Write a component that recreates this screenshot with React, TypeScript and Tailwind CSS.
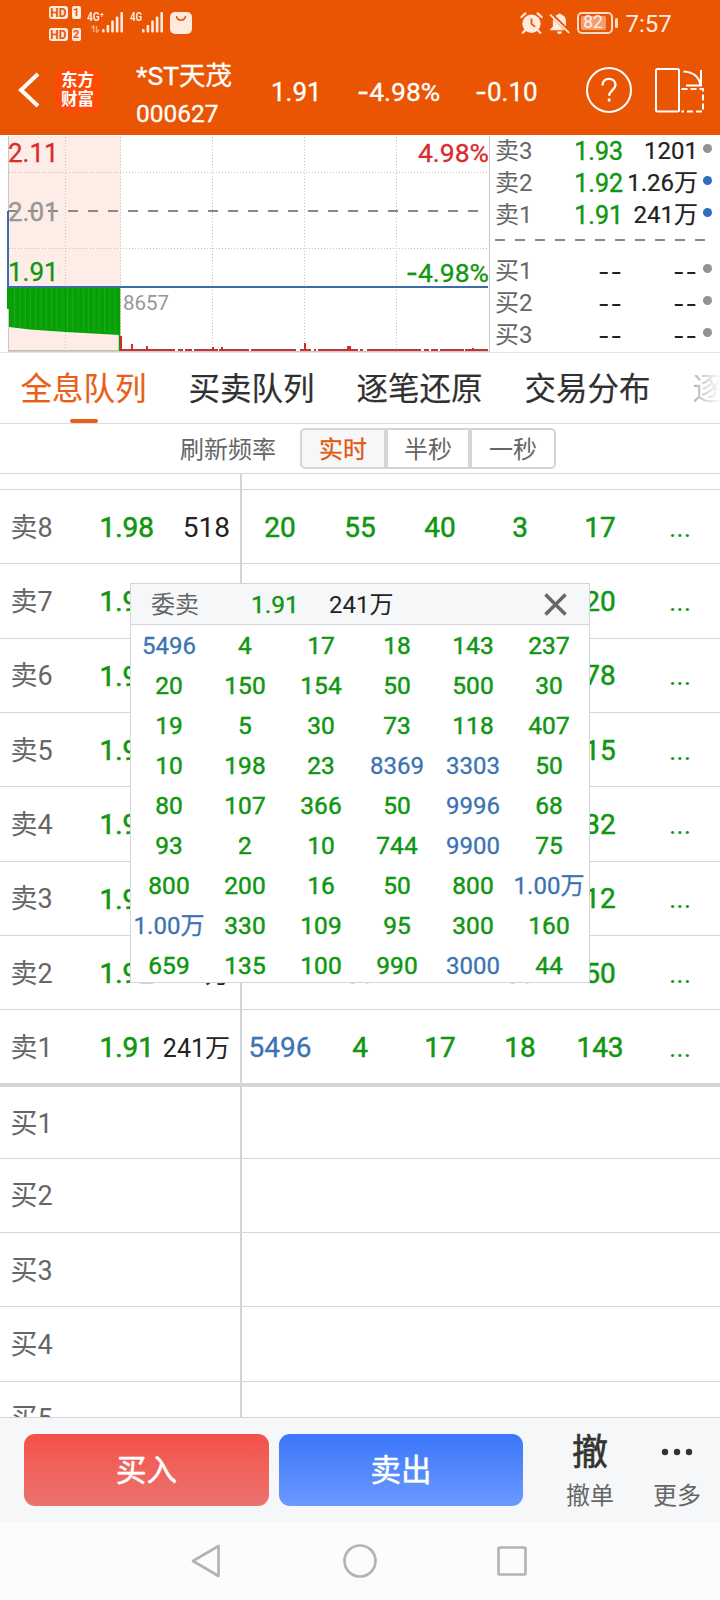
import React from "react";

type Cell = string;

const asks: { label: string; price: string; vol: string; queue: Cell[] }[] = [
  { label: "卖8", price: "1.98", vol: "518", queue: ["20", "55", "40", "3", "17"] },
  { label: "卖7", price: "1.97", vol: "", queue: ["", "", "", "", "20"] },
  { label: "卖6", price: "1.96", vol: "", queue: ["", "", "", "", "78"] },
  { label: "卖5", price: "1.95", vol: "", queue: ["", "", "", "", "15"] },
  { label: "卖4", price: "1.94", vol: "", queue: ["", "", "", "", "32"] },
  { label: "卖3", price: "1.93", vol: "", queue: ["", "", "", "", "12"] },
  { label: "卖2", price: "1.92", vol: "1.26万", queue: ["", "50", "", "50", "50"] },
  { label: "卖1", price: "1.91", vol: "241万", queue: ["5496", "4", "17", "18", "143"] },
];

const bids = ["买1", "买2", "买3", "买4", "买5"];

const popupRows: Cell[][] = [
  ["5496", "4", "17", "18", "143", "237"],
  ["20", "150", "154", "50", "500", "30"],
  ["19", "5", "30", "73", "118", "407"],
  ["10", "198", "23", "8369", "3303", "50"],
  ["80", "107", "366", "50", "9996", "68"],
  ["93", "2", "10", "744", "9900", "75"],
  ["800", "200", "16", "50", "800", "1.00万"],
  ["1.00万", "330", "109", "95", "300", "160"],
  ["659", "135", "100", "990", "3000", "44"],
];

const isLarge = (v: Cell) => v.includes("万") || Number(v) >= 3000;

function Signal() {
  return (
    <svg width="22" height="21" viewBox="0 0 22 21" fill="#ffeadf">
      <rect x="0" y="17" width="2.6" height="3.6" rx="1" />
      <rect x="4.6" y="13" width="2.6" height="7.6" rx="1" />
      <rect x="9.2" y="8.5" width="2.6" height="12" rx="1" />
      <rect x="13.8" y="4.5" width="2.6" height="16" rx="1" />
      <rect x="18.4" y="0" width="2.6" height="20.6" rx="1" />
    </svg>
  );
}

function HdBadge({ n }: { n: string }) {
  return (
    <div className="flex gap-[4px]">
      <span className="flex h-[13px] w-[19px] items-center justify-center rounded-[3px] bg-[#ffeadf] text-[12px] font-bold leading-none text-[#ea5504]">
        HD
      </span>
      <span className="flex h-[13px] w-[8.5px] items-center justify-center rounded-[2px] bg-[#ffeadf] text-[11px] font-bold leading-none text-[#ea5504]">
        {n}
      </span>
    </div>
  );
}

function StatusBar() {
  return (
    <div className="flex h-[45px] items-start pl-[49px] text-[#ffeadf]">
      <div className="flex flex-col gap-[9px] pt-[6px]">
        <HdBadge n="1" />
        <HdBadge n="2" />
      </div>
      <div className="ml-[6px] flex w-[15px] flex-col pt-[12px]">
        <span className="w-[20px] origin-left scale-x-[.85] text-[12px] font-bold leading-[10px] whitespace-nowrap">4G⁺</span>
        <svg className="ml-[4px] mt-[3px]" width="9" height="8" viewBox="0 0 9 8" fill="none" stroke="#f6a67b" strokeWidth="1.5">
          <path d="M0.5 3L2.7 .8V7M5.5 1V7L8 4.7" />
        </svg>
      </div>
      <div className="pt-[12px]"><Signal /></div>
      <div className="ml-[6px] w-[12px] pt-[12px]">
        <span className="block w-[16px] origin-left scale-x-[.8] text-[12px] font-bold leading-[10px]">4G</span>
      </div>
      <div className="pt-[12px]"><Signal /></div>
      <svg className="ml-[6px] mt-[12px]" width="22" height="22" viewBox="0 0 22 22">
        <rect width="22" height="22" rx="5" fill="#ffeadf" />
        <path d="M6.5 4.5a4.6 4.6 0 0 0 9 0" fill="none" stroke="#ea5504" strokeWidth="1.5" strokeLinecap="round" />
      </svg>
      <svg className="ml-[328px] mt-[12px]" width="23" height="22" viewBox="0 0 23 22">
        <circle cx="11.5" cy="11.7" r="9.2" fill="#ffeadf" />
        <path d="M1.4 5L5.4 1.4M21.6 5L17.6 1.4M5 18.5l-2.2 2.2M18 18.5l2.2 2.2" stroke="#ffeadf" strokeWidth="2.2" strokeLinecap="round" />
        <path d="M11.5 6.5v5.4l3.6 3" fill="none" stroke="#ea5504" strokeWidth="1.8" />
      </svg>
      <svg className="ml-[6px] mt-[12px]" width="21" height="22" viewBox="0 0 21 22">
        <path d="M6.500 3.800L17 14.200V8.800C17 5.700 15.200 3.200 12.200 2.400a1.800 1.800 0 0 0-3.200 0C8 2.700 7.200 3.200 6.500 3.800ZM4.300 7C4 7.600 3.900 8.200 3.900 8.800V14.400L1.200 17.200V18.200H15.400Z" fill="#ffeadf" />
        <path d="M8 19.600h5a2.500 2.500 0 0 1-5 0Z" fill="#ffeadf" />
        <path d="M2.800 2.300L20 18.800" stroke="#ea5504" strokeWidth="1.500" />
        <path d="M1.600 3.200L19.600 20.400" stroke="#ffeadf" strokeWidth="1.800" strokeLinecap="round" />
      </svg>
      <div className="ml-[7px] mt-[12px] flex h-[22px] items-center gap-[2px]">
        <div className="flex h-[22px] w-[36px] rounded-[5px] border-2 border-[#ffd9c4] p-[2px]">
          <div className="flex w-[25px] items-center justify-center rounded-[2px] bg-[#f39d6f] text-[17.500px] leading-none text-[#fff1e9]">82</div>
        </div>
        <div className="h-[10px] w-[3px] rounded-full bg-[#ffd9c4]" />
      </div>
      <span className="ml-[8px] mt-[12px] text-[24px] leading-[24px]">7:57</span>
    </div>
  );
}

function Minus() {
  return <span className="font-[Inter,sans-serif]">-</span>;
}

function Header() {
  return (
    <header className="h-[135px] bg-[#ea5504] text-white">
      <StatusBar />
      <div className="flex h-[90px] items-center pl-[18px]">
        <svg width="22" height="36" viewBox="0 0 22 36" fill="none" stroke="#fff" strokeWidth="4">
          <path d="M20 2L3 18L20 34" />
        </svg>
        <div className="ml-[15px] flex h-[45px] w-[45px] flex-col items-center justify-center rounded-[10px] bg-[#fd4a06] text-[16.500px] font-bold leading-[19px]">
          <span>东方</span>
          <span>财富</span>
        </div>
        <div className="ml-[36px] flex w-[135px] flex-col pt-[10px] [-webkit-text-stroke:0.3px_currentColor]">
          <span className="text-[26.500px] leading-[38px]">*ST天茂</span>
          <span className="text-[24.500px] leading-[38px]">000627</span>
        </div>
        <span className="w-[86px] pt-[4px] text-[26px] [-webkit-text-stroke:0.3px_currentColor]">1.91</span>
        <span className="w-[118px] pt-[4px] text-[26.500px] [-webkit-text-stroke:0.3px_currentColor]"><Minus />4.98%</span>
        <span className="w-[111px] pt-[4px] text-[26px] [-webkit-text-stroke:0.3px_currentColor]"><Minus />0.10</span>
        <svg width="46" height="46" viewBox="0 0 46 46" fill="none" stroke="#fff" strokeWidth="2">
          <circle cx="23" cy="23" r="22" />
          <path d="M16.500 18.500c0-4 2.700-6.700 6.500-6.700s6.500 2.500 6.500 6c0 5-6.300 5.800-6.300 11" strokeWidth="2.300" />
          <path d="M23.100 31.500v3" strokeWidth="2.600" />
        </svg>
        <svg className="ml-[23px]" width="49" height="46" viewBox="0 0 49 46" fill="none" stroke="#fff" strokeWidth="2">
          <rect x="1" y="2" width="23" height="42.500" rx="1.500" />
          <path d="M28.500 4.500C38 5 44 10 45.500 18M46 3V18.500H31" />
          <path d="M26.500 22H48V44.500H26.500" strokeDasharray="6 3" />
        </svg>
      </div>
    </header>
  );
}

const redTicks: [number, number][] = [[132, 6], [147, 4], [213, 3], [222, 3], [305, 7], [348, 4], [350, 4], [473, 2]];

function Chart() {
  return (
    <div className="relative h-[217px] w-[490px]">
      <svg width="490" height="217" viewBox="0 135 490 217">
        <rect x="9" y="136" width="112" height="216" fill="#fdede6" />
        <path d="M8.500 136V352M489.500 136V352" stroke="#c9c9c9" />
        <path d="M8 351.500H490" stroke="#e3c4c4" />
        <path d="M65.500 137V350M120.500 137V350M212.500 137V350M304.500 137V350M396.500 137V350M9 172.500H488M9 248.500H488" stroke="#c4c4c4" strokeDasharray="1 2" />
        <path d="M8 211H488" stroke="#888" strokeWidth="2" strokeDasharray="10 10" />
        <path d="M7 287H120V335L66 332L30 329.500L9 327V309H7Z" fill="#07a007" />
        {Array.from({ length: 20 }, (_, i) => (
          <path key={i} d={`M${14.500 + i * 5.300} 289V${327 + i * 0.3}`} stroke="#27ad27" strokeWidth="0.8" />
        ))}
        <path d="M119.500 287V351" stroke="#07a007" strokeWidth="1.500" />
        <path d="M9 350.500H119" stroke="#a9cf9c" />
        <path d="M8 211V287H488" fill="none" stroke="#386eaa" strokeWidth="2" />
        <path d="M121 336V351" stroke="#d8282c" strokeWidth="2" />
        <path d="M121 350H488" stroke="#b73a3c" strokeWidth="2" strokeDasharray="54 3 5 2 7 2 24 1 30 2 45 4 11 3 2 2 40 2 3 4" />
        {redTicks.map(([x, h]) => (
          <rect key={x} x={x - 1} y={350 - h} width="2" height={h} fill="#d8282c" />
        ))}
      </svg>
      <div className="absolute inset-0 text-[26px] leading-[30px] [-webkit-text-stroke:0.3px_currentColor]">
        <span className="absolute left-[8px] top-[3px] text-[#d92b2b]">2.11</span>
        <span className="absolute left-[8px] top-[62px] text-[#979797]">2.01</span>
        <span className="absolute left-[8px] top-[122px] text-[#109610]">1.91</span>
        <span className="absolute right-[1px] top-[3px] text-[26.500px] text-[#d92b2b]">4.98%</span>
        <span className="absolute right-[1px] top-[122px] text-[26.500px] text-[#109610]"><Minus />4.98%</span>
        <span className="absolute left-[123px] top-[153px] text-[20.500px] text-[#979797] [-webkit-text-stroke:0px]">8657</span>
      </div>
    </div>
  );
}

function QuoteRow({ l, p, v, blue }: { l: string; p: string; v: string; blue?: boolean }) {
  const empty = p === "--";
  return (
    <div className="flex h-[32px] items-center pl-[5px]">
      <span className="w-[50px] text-[24px] text-[#666]">{l}</span>
      <span className={empty ? "w-[78px] pt-[2px] text-right font-[Inter,sans-serif] tracking-[1px] text-[25px] text-[#222]" : "w-[78px] text-right text-[25px] text-[#109610] [-webkit-text-stroke:0.4px_currentColor]"}>{p}</span>
      <span className={empty ? "w-[75px] pt-[2px] text-right font-[Inter,sans-serif] tracking-[1px] text-[25px] text-[#222]" : "w-[75px] whitespace-nowrap text-right text-[24px] text-[#222] [-webkit-text-stroke:0.2px_currentColor]"}>{v}</span>
      <span className={blue ? "mb-[5px] ml-[5px] size-[9px] rounded-full bg-[#2f6fbd]" : "mb-[5px] ml-[5px] size-[9px] rounded-full bg-[#929297]"} />
    </div>
  );
}

function Quotes() {
  return (
    <div className="w-[230px] leading-none">
      <QuoteRow l="卖3" p="1.93" v="1201" />
      <QuoteRow l="卖2" p="1.92" v="1.26万" blue />
      <QuoteRow l="卖1" p="1.91" v="241万" blue />
      <svg className="block" width="230" height="24">
        <path d="M5 9H220" stroke="#888" strokeWidth="2" strokeDasharray="10 10" />
      </svg>
      <QuoteRow l="买1" p="--" v="--" />
      <QuoteRow l="买2" p="--" v="--" />
      <QuoteRow l="买3" p="--" v="--" />
    </div>
  );
}

function Tabs() {
  return (
    <nav className="flex h-[71px] gap-[42px] overflow-hidden border-b border-[#dcdee0] pl-[20.500px] text-[31.500px] leading-[74px] whitespace-nowrap text-[#303030] [-webkit-text-stroke:0.2px_currentColor]">
      <div className="flex flex-col items-center text-[#ea5f18]">
        <span className="h-[66px]">全息队列</span>
        <span className="h-[4px] w-[28px] rounded-full bg-[#ea5f18]" />
      </div>
      <span>买卖队列</span>
      <span>逐笔还原</span>
      <span>交易分布</span>
      <span className="bg-linear-to-r from-[#b5b5b5] from-0% to-white to-[28px] bg-clip-text text-transparent [-webkit-text-stroke:0px]">逐笔</span>
    </nav>
  );
}

function RefreshBar() {
  return (
    <div className="flex h-[50px] items-center border-b border-[#d3d6da] pl-[180px] text-[24px] leading-none text-[#666]">
      <span className="pt-[2px]">刷新频率</span>
      <div className="ml-[24px] flex h-[41px]">
        <span className="flex w-[86px] items-center justify-center rounded-l-[5px] border-2 border-[#d2d6db] bg-[#f6f7f9] pt-[2px] text-[#e05a14] [-webkit-text-stroke:0.3px_currentColor]">实时</span>
        <span className="flex w-[84px] items-center justify-center border-2 border-[#d2d6db] pt-[2px]">半秒</span>
        <span className="flex w-[86px] items-center justify-center rounded-r-[5px] border-2 border-[#d2d6db] pt-[2px]">一秒</span>
      </div>
    </div>
  );
}

function Book() {
  return (
    <div className="h-[943px] overflow-hidden leading-none">
      <div className="flex h-[16px] border-b border-[#d5d8db]">
        <div className="w-[242px] border-r-2 border-[#d2d6db]" />
      </div>
      {asks.map((r, i) => (
        <div
          key={r.label}
          className={
            i === asks.length - 1
              ? "flex h-[77px] border-b-4 border-[#d4d7da]"
              : "flex h-[74.330px] border-b border-[#d5d8db]"
          }
        >
          <div className="flex w-[242px] shrink-0 items-center border-r-2 border-[#d2d6db] pl-[10.500px] pt-[3px]">
            <span className="w-[89px] text-[27px] text-[#666]">{r.label}</span>
            <span className="text-[28px] text-[#109610] [-webkit-text-stroke:0.6px_currentColor]">{r.price}</span>
            <span className={r.vol.includes("万") ? "flex-1 pr-[10px] text-right text-[25px] whitespace-nowrap text-[#222]" : "flex-1 pr-[10px] text-right text-[28px] text-[#222]"}>{r.vol}</span>
          </div>
          <div className="-ml-[2px] flex items-center pt-[2px] text-[28px]">
            {r.queue.map((q, j) => (
              <span key={j} className={q === "5496" ? "w-[80px] text-center text-[#3b73b3] [-webkit-text-stroke:0.3px_currentColor]" : "w-[80px] text-center text-[#109610] [-webkit-text-stroke:0.5px_currentColor]"}>{q}</span>
            ))}
            <span className="w-[80px] text-center text-[#109610]">...</span>
          </div>
        </div>
      ))}
      {bids.map((b, i) => (
        <div key={b} className={i === 0 ? "flex h-[71.500px] border-b border-[#d5d8db]" : "flex h-[74.330px] border-b border-[#d5d8db]"}>
          <div className="flex w-[242px] items-center border-r-2 border-[#d2d6db] pl-[10.500px] pt-[3px] text-[27px] text-[#666]">{b}</div>
        </div>
      ))}
    </div>
  );
}

function Popup() {
  return (
    <div className="absolute left-[130px] top-[583px] h-[400px] w-[460px] overflow-hidden border border-[#d3d6da] bg-white text-[24.500px] leading-none">
      <div className="flex h-[41px] items-center border-b border-[#d3d6da] bg-[#f6f7f9] pl-[20px]">
        <span className="w-[100px] pt-[2px] text-[24px] text-[#666]">委卖</span>
        <span className="w-[78px] pt-[2px] text-[#109610] [-webkit-text-stroke:0.4px_currentColor]">1.91</span>
        <span className="w-[215px] pt-[2px] text-[24px] text-[#222]">241万</span>
        <svg width="23" height="23" viewBox="0 0 23 23" stroke="#666" strokeWidth="3.500">
          <path d="M1.500 1.500L21.500 21.500M21.500 1.500L1.500 21.500" />
        </svg>
      </div>
      <div className="grid w-[456px] grid-cols-6">
        {popupRows.flat().map((v, i) => (
          <span
            key={i}
            className={
              isLarge(v)
                ? "flex h-[40px] items-center justify-center whitespace-nowrap pt-[2px] text-[24px] text-[#3b73b3] [-webkit-text-stroke:0.3px_currentColor]"
                : "flex h-[40px] items-center justify-center pt-[2px] text-[#109610] [-webkit-text-stroke:0.45px_currentColor]"
            }
          >
            {v}
          </span>
        ))}
      </div>
    </div>
  );
}

function TradeBar() {
  return (
    <div className="flex h-[105px] items-start border-t border-[#d3d6da] bg-[#f6f7f9] pl-[24px] pt-[16px] leading-none">
      <button className="h-[72px] w-[245px] rounded-[11px] bg-linear-to-b from-[#f45049] to-[#eb736e] pt-[3px] text-[30.500px] text-white [-webkit-text-stroke:0.5px_currentColor]">买入</button>
      <button className="ml-[10px] h-[72px] w-[244px] rounded-[11px] bg-linear-to-b from-[#3a76fa] to-[#6b99ff] pt-[3px] text-[30.500px] text-white [-webkit-text-stroke:0.5px_currentColor]">卖出</button>
      <div className="ml-[27px] flex w-[80px] flex-col items-center text-[#333]">
        <span className="h-[50px] text-[36px] leading-[39px] [-webkit-text-stroke:0.6px_currentColor]">撤</span>
        <span className="text-[24px] text-[#666]">撤单</span>
      </div>
      <div className="ml-[7px] flex w-[80px] flex-col items-center text-[#333]">
        <svg className="h-[50px]" width="32" height="50" fill="#333">
          <circle cx="4" cy="18" r="3.200" />
          <circle cx="16" cy="18" r="3.200" />
          <circle cx="28" cy="18" r="3.200" />
        </svg>
        <span className="text-[24px] text-[#666]">更多</span>
      </div>
    </div>
  );
}

function SystemNav() {
  return (
    <div className="flex h-[78px] items-center bg-[#fcfcfc] pl-[190px]">
      <svg width="340" height="38" viewBox="0 0 340 38" fill="none" stroke="#b3b3b3" strokeWidth="2.700" strokeLinejoin="round">
        <path d="M3 19L28.500 4V34Z" />
        <circle cx="170" cy="19" r="15.500" />
        <rect x="308.500" y="5.500" width="27" height="27" rx="1" />
      </svg>
    </div>
  );
}

export default function App() {
  return (
    <div className="relative h-[1600px] w-[720px] overflow-hidden bg-white font-[Roboto,'Noto_Sans_CJK_SC',sans-serif]">
      <Header />
      <div className="flex h-[218px] border-b border-[#e2e2e2]">
        <Chart />
        <Quotes />
      </div>
      <Tabs />
      <RefreshBar />
      <Book />
      <TradeBar />
      <SystemNav />
      <Popup />
    </div>
  );
}
